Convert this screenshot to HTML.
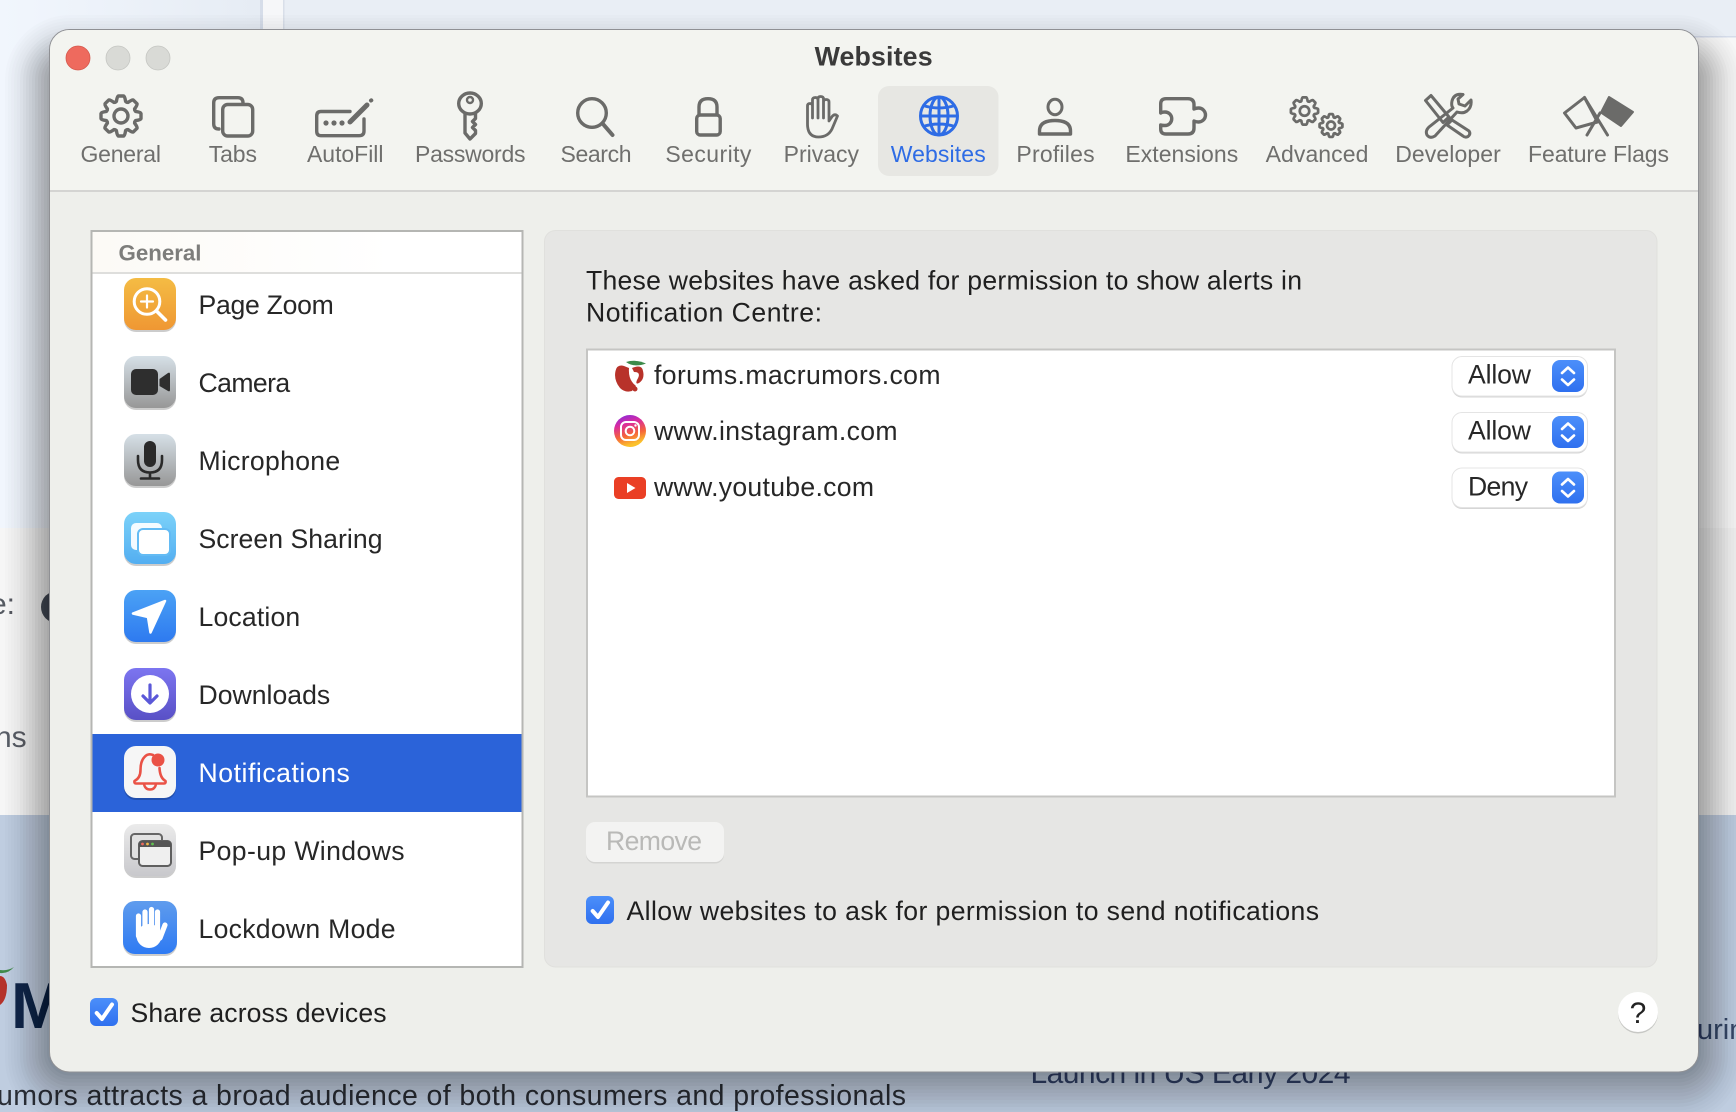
<!DOCTYPE html>
<html><head><meta charset="utf-8"><title>Websites</title>
<style>
html,body{margin:0;padding:0;background:#eef2f8;width:1736px;height:1112px;overflow:hidden}
svg{display:block;position:absolute;left:0;top:0}
text{font-family:"Liberation Sans",sans-serif}
.tb{font-size:23px;fill:#6f6f6d}
.li{font-size:26.6px;fill:#272727}
.tbi{fill:none;stroke:#6b6b69;stroke-width:3.4;stroke-linecap:round;stroke-linejoin:round}
</style></head><body>
<svg width="1736" height="1112" viewBox="0 0 1736 1112" xmlns="http://www.w3.org/2000/svg">
<defs>
<linearGradient id="bgl" x1="0" x2="1" y1="0" y2="0"><stop offset="0" stop-color="#f1f6fd"/><stop offset="1" stop-color="#e6ecf4"/></linearGradient>
<linearGradient id="hd" x1="0" x2="1" y1="0" y2="0"><stop offset="0" stop-color="#fcfaf6"/><stop offset="1" stop-color="#ffffff"/></linearGradient>
<linearGradient id="gO" x1="0" x2="0" y1="0" y2="1"><stop offset="0" stop-color="#f4bc44"/><stop offset="1" stop-color="#ef9733"/></linearGradient>
<linearGradient id="gG" x1="0" x2="0" y1="0" y2="1"><stop offset="0" stop-color="#d6e0e7"/><stop offset="1" stop-color="#979797"/></linearGradient>
<linearGradient id="gS" x1="0" x2="0" y1="0" y2="1"><stop offset="0" stop-color="#7cd2f9"/><stop offset="1" stop-color="#53aef1"/></linearGradient>
<linearGradient id="gB" x1="0" x2="0" y1="0" y2="1"><stop offset="0" stop-color="#4ba2f5"/><stop offset="1" stop-color="#2e7af0"/></linearGradient>
<linearGradient id="gP" x1="0" x2="0" y1="0" y2="1"><stop offset="0" stop-color="#7c75f0"/><stop offset="1" stop-color="#5950c6"/></linearGradient>
<linearGradient id="gW" x1="0" x2="0" y1="0" y2="1"><stop offset="0" stop-color="#ebebeb"/><stop offset="1" stop-color="#c8c8cc"/></linearGradient>
<linearGradient id="gL" x1="0" x2="0" y1="0" y2="1"><stop offset="0" stop-color="#5f9ced"/><stop offset="1" stop-color="#2e7af3"/></linearGradient>
<linearGradient id="gC" x1="0" x2="0" y1="0" y2="1"><stop offset="0" stop-color="#4c8ffa"/><stop offset="1" stop-color="#2f70ef"/></linearGradient>
<linearGradient id="gI" x1="0" x2="0.3" y1="0" y2="1"><stop offset="0" stop-color="#7a2be8"/><stop offset=".35" stop-color="#d92ba0"/><stop offset=".7" stop-color="#f5643a"/><stop offset="1" stop-color="#fbc22c"/></linearGradient>
<g id="tooth"><path d="M-5.74-13.86L-4.6-14.6Q-3.8-20-2.6-20H2.6Q3.8-20 4.6-14.6L5.74-13.86"/></g>
<g id="gear"><use href="#tooth"/><use href="#tooth" transform="rotate(45)"/><use href="#tooth" transform="rotate(90)"/><use href="#tooth" transform="rotate(135)"/><use href="#tooth" transform="rotate(180)"/><use href="#tooth" transform="rotate(225)"/><use href="#tooth" transform="rotate(270)"/><use href="#tooth" transform="rotate(315)"/><circle r="7"/></g>
<g id="sel">
<rect x="1452" y="358" width="135.5" height="39.5" rx="10" fill="#000" fill-opacity=".16"/>
<rect x="1452" y="356.5" width="135.5" height="39.5" rx="10" fill="#fff" stroke="#e4e4e4"/>
<rect x="1552" y="360" width="32" height="32" rx="8" fill="url(#gC)"/>
<path d="M1562 373L1568 367.5L1574 373M1562 379.5L1568 385L1574 379.5" fill="none" stroke="#fff" stroke-width="2.6" stroke-linecap="round" stroke-linejoin="round"/>
</g>
</defs>

<!-- page behind -->
<rect width="1736" height="1112" fill="#f7f7f7"/>
<rect width="285" height="528" fill="url(#bgl)"/>
<rect y="528" x="1698" width="38" height="287" fill="#f2f2f2"/>
<rect width="1736" height="36" fill="#e9eef5"/>
<rect x="0" y="0" width="262" height="36" fill="url(#bgl)"/>
<rect x="260" y="0" width="3" height="36" fill="#d6dde9"/>
<rect x="263" y="0" width="20" height="36" fill="#f6f7f9"/>
<rect x="283" y="0" width="1.5" height="36" fill="#d9dfe9"/>
<rect x="285" y="36" width="1451" height="1.5" fill="#d5dcea"/>
<rect x="0" y="528" width="60" height="287" fill="#f6f6f6"/>
<rect x="0" y="815" width="1736" height="297" fill="#bfcde0"/>
<text x="-10" y="614" font-size="30" fill="#555a62">e:</text>
<circle cx="57" cy="607" r="16" fill="#4a4f58"/>
<text x="-5" y="747" font-size="30" fill="#5a5f68">ns</text>
<path d="M0 976Q5 976 7 985Q7 1000 0 1005Z" fill="#b5322a"/>
<path d="M0 970Q8 971 14 967Q8 974 0 973Z" fill="#3f8a4a"/>
<text x="11" y="1028" font-size="65" font-weight="bold" fill="#14284a">M</text>
<text x="-3" y="1105" font-size="28.5" fill="#2a2e36" textLength="909">umors attracts a broad audience of both consumers and professionals</text>
<text x="1030.5" y="1083" font-size="30" fill="#37476a" textLength="320">Launch in US Early 2024</text>
<text x="1697" y="1039" font-size="29" fill="#37476a">urin</text>

<!-- window shadow built from stacked translucent rounded rects -->
<g fill="#000" fill-opacity=".031">
<rect x="47" y="57" width="1654" height="1018.5" rx="23"/>
<rect x="44" y="54" width="1660" height="1025" rx="26"/>
<rect x="41" y="51" width="1666" height="1031.5" rx="29"/>
<rect x="38" y="48" width="1672" height="1038" rx="32"/>
<rect x="35" y="45" width="1678" height="1044.5" rx="35"/>
</g>
<g fill="#000" fill-opacity=".023">
<rect x="32" y="42" width="1684" height="1051" rx="38"/>
<rect x="29" y="39" width="1690" height="1057.5" rx="41"/>
<rect x="26" y="36" width="1696" height="1064" rx="44"/>
<rect x="23" y="33" width="1702" height="1070.5" rx="47"/>
<rect x="20" y="30" width="1708" height="1077" rx="50"/>
</g>
<g fill="#000" fill-opacity=".012">
<rect x="17" y="27" width="1714" height="1083.5" rx="53"/>
<rect x="14" y="24" width="1720" height="1090" rx="56"/>
<rect x="11" y="21" width="1726" height="1096.5" rx="59"/>
<rect x="8" y="18" width="1732" height="1103" rx="62"/>
<rect x="5" y="15" width="1738" height="1109.5" rx="65"/>
</g>

<!-- window -->
<rect x="49.5" y="29.5" width="1649" height="1042.5" rx="20" fill="#eeefeb" stroke="#8f9094" stroke-width="1"/>
<path d="M50 190V49.5A19.5 19.5 0 0 1 69.5 30H1678.5A19.5 19.5 0 0 1 1698 49.5V190Z" fill="#f3f4f0"/>
<rect x="50" y="190" width="1648" height="2" fill="#d4d4d2"/>
<circle cx="78" cy="58" r="12" fill="#ee6a5e" stroke="#d5584d" stroke-width=".8"/>
<circle cx="118" cy="58" r="12" fill="#d9dad6" stroke="#c5c6c2" stroke-width=".8"/>
<circle cx="158" cy="58" r="12" fill="#d9dad6" stroke="#c5c6c2" stroke-width=".8"/>
<text x="814.6" y="65.5" font-size="26.8" font-weight="bold" fill="#3a3a3a" textLength="118">Websites</text>

<rect x="878" y="86" width="120.5" height="90" rx="11" fill="#e7e7e3"/>

<!-- toolbar icons -->
<g class="tbi">
<use href="#gear" transform="translate(121 116)"/>
<path d="M219 129Q213.7 129 213.7 124V103Q213.7 97.7 219 97.7H238Q243 97.7 243 103"/>
<rect x="222.7" y="104.5" width="30" height="31.5" rx="5"/>
<path d="M350 111.5H321Q316.7 111.5 316.7 116V131Q316.7 135.7 321 135.7H359Q364 135.7 364 131V119"/>
<path d="M350 122L367 105" stroke-width="5"/>
<path d="M371 100.5L371.3 100.3" stroke-width="4"/>
<ellipse cx="470" cy="103.5" rx="11.3" ry="10.5"/>
<circle cx="470" cy="100" r="3" stroke-width="2.4"/>
<path d="M465 113.5V133L470 139L475.5 133.5V130.5L472.5 127.5L475.5 124.5L472.5 121.5L475.5 118.5V113.5"/>
<circle cx="592" cy="113" r="14.3"/>
<path d="M603 124L612.5 135" stroke-width="4"/>
<path d="M699 114V107Q699 98.7 708 98.7Q717 98.7 717 107V114"/>
<rect x="696.7" y="115" width="23.5" height="20" rx="3.5"/>
<path d="M807.5 124V106Q807.5 103.5 810 103.5Q812.5 103.5 812.5 106V100Q812.5 97.5 815.5 97.5Q818 97.5 818 100V99Q818 96.5 820.5 96.5Q823.5 96.5 823.5 99V102Q823.5 99.5 826 99.5Q829 99.5 829 102V121L832.5 116Q835 113.5 837.5 116L832 129Q828 137 818.5 137Q807.5 137 807.5 124ZM812.5 106V118M818 100V118M823.5 102V118" stroke-width="2.8"/>
<ellipse cx="1055" cy="107" rx="7" ry="7.7" stroke-width="3"/>
<path d="M1039.5 134V131Q1039.5 120.5 1055 120.5Q1070.5 120.5 1070.5 131V134Z"/>
<path d="M1166 98.7H1188Q1194 98.7 1194 104.7V109Q1196 108 1198.5 108A7 7 0 0 1 1198.5 122Q1196 122 1194 121V128Q1194 134 1188 134H1166Q1160.7 134 1160.7 129V125Q1162 125.5 1165 125.5A6.7 6.7 0 0 0 1165 112Q1162 112 1160.7 113V104Q1160.7 98.7 1166 98.7Z"/>
<use href="#gear" transform="translate(1304.5 111) scale(.68)" stroke-width="4"/>
<use href="#gear" transform="translate(1331 125.5) scale(.57)" stroke-width="4.8"/>
<g stroke-width="3">
<path d="M1425.5 100.5L1431 95.5L1449 117L1443 122.5Z"/>
<path d="M1447 125L1452 120L1469 131Q1471 134 1468 136.5Q1465 138 1463 136Z"/>
<path d="M1463 94.5Q1454 93 1452 101Q1451 106 1453 108L1429 127Q1425 131 1427 135Q1430 139 1435 136L1457 112Q1463 114 1467 111Q1472 107 1471 100L1465 106L1459 104L1458 99Z"/>
</g>
<path d="M1564.5 113L1584.5 97.5L1597.5 122L1576 128Z" stroke-width="3"/>
<path d="M1584.5 97.5L1607.5 135M1600 113L1587 135" stroke-width="3"/>
</g>
<circle cx="326" cy="123" r="2.6" fill="#6b6b69"/><circle cx="334" cy="123" r="2.6" fill="#6b6b69"/><circle cx="342" cy="123" r="2.6" fill="#6b6b69"/>
<path d="M1601 112.5L1609 97L1633 112L1621 126Z" fill="#6b6b69" stroke="#6b6b69" stroke-width="2" stroke-linejoin="round"/>
<g fill="none" stroke="#2e6ce5" stroke-width="3">
<ellipse cx="939" cy="116" rx="18.5" ry="19"/>
<ellipse cx="939" cy="116" rx="9" ry="19"/>
<path d="M939 97V135M920.5 116H957.5M923 105.5Q939 110.5 955 105.5M923 126.5Q939 121.5 955 126.5"/>
</g>

<g class="tb">
<text x="80.5" y="162" textLength="80.5">General</text>
<text x="208.7" y="162" textLength="48.3">Tabs</text>
<text x="307" y="162" textLength="76.5">AutoFill</text>
<text x="415" y="162" textLength="110.5">Passwords</text>
<text x="560.5" y="162" textLength="71">Search</text>
<text x="665.4" y="162" textLength="86">Security</text>
<text x="783.6" y="162" textLength="75.4">Privacy</text>
<text x="890.7" y="162" textLength="95" style="fill:#2e6ce5">Websites</text>
<text x="1016.4" y="162" textLength="78.2">Profiles</text>
<text x="1125.4" y="162" textLength="112.8">Extensions</text>
<text x="1265.6" y="162" textLength="102.8">Advanced</text>
<text x="1395.2" y="162" textLength="105.6">Developer</text>
<text x="1528" y="162" textLength="141">Feature Flags</text>
</g>

<!-- sidebar list -->
<rect x="91.5" y="231" width="431" height="736" fill="#fff" stroke="#b5b6b3" stroke-width="2"/>
<rect x="92.5" y="232" width="300" height="40" fill="url(#hd)"/>
<rect x="92.5" y="272" width="429" height="2" fill="#dededc"/>
<text x="118.5" y="260.5" font-size="22.3" font-weight="bold" fill="#7d7d7b" textLength="83">General</text>
<rect x="92.5" y="734" width="429" height="78" fill="#2b63d9"/>

<!-- icon drop shadows -->
<g fill="#000" fill-opacity=".2">
<rect x="124" y="280" width="52" height="52" rx="12"/>
<rect x="124" y="358" width="52" height="52" rx="12"/>
<rect x="124" y="436" width="52" height="52" rx="12"/>
<rect x="124" y="514" width="52" height="52" rx="12"/>
<rect x="124" y="592" width="52" height="52" rx="12"/>
<rect x="124" y="670" width="52" height="52" rx="12"/>
<rect x="124" y="748" width="52" height="52" rx="12"/>
<rect x="124" y="826" width="52" height="52" rx="12"/>
<rect x="123" y="903" width="54" height="53" rx="12"/>
</g>

<rect x="124" y="278" width="52" height="52" rx="12" fill="url(#gO)"/>
<g fill="none" stroke="#fff" stroke-linecap="round">
<circle cx="147" cy="301.5" r="12.8" stroke-width="3"/>
<path d="M147 295.5V307.5M141 301.5H153" stroke-width="2.2"/>
<path d="M156.5 311L165.5 320" stroke-width="3.6"/>
</g>

<rect x="124" y="356" width="52" height="52" rx="12" fill="url(#gG)"/>
<rect x="131" y="369" width="27" height="26" rx="5" fill="#2e2e2e"/>
<path d="M159.5 379L168 373Q170 372 170 374V390Q170 392 168 391L159.5 386Z" fill="#2e2e2e"/>

<rect x="124" y="434" width="52" height="52" rx="12" fill="url(#gG)"/>
<rect x="144" y="441" width="12" height="26" rx="6" fill="#2a2a2a"/>
<path d="M138 456V460Q138 472.5 150 472.5Q162 472.5 162 460V456M150 472.5V478M141 478.5H159" fill="none" stroke="#2a2a2a" stroke-width="2.6" stroke-linecap="round"/>

<rect x="124" y="512" width="52" height="52" rx="12" fill="url(#gS)"/>
<rect x="131" y="523" width="31" height="27" rx="5" fill="#fff" opacity=".92"/>
<rect x="138" y="529" width="32" height="26" rx="5" fill="#fff" stroke="#63bbf4" stroke-width="2"/>

<rect x="124" y="590" width="52" height="52" rx="12" fill="url(#gB)"/>
<path d="M165 601L133 613.5L148 617L150.5 632.5Z" fill="#fff" stroke="#fff" stroke-width="2.5" stroke-linejoin="round"/>

<rect x="124" y="668" width="52" height="52" rx="12" fill="url(#gP)"/>
<circle cx="150" cy="694" r="19" fill="#fff"/>
<path d="M150 685V702M143 696L150 703L157 696" fill="none" stroke="#5b58d8" stroke-width="3.2" stroke-linecap="round" stroke-linejoin="round"/>

<rect x="124" y="746" width="52" height="52" rx="12" fill="#f6f6f6"/>
<path d="M153 755Q148 753 144.5 757Q140.5 761 140.5 770Q140.5 778 134.5 781Q134 783.5 136 783.5H164Q166 783.5 165.5 781Q160 778 159.5 768" fill="none" stroke="#ea5246" stroke-width="2.6" stroke-linecap="round" stroke-linejoin="round"/>
<path d="M144 784Q145 789.5 150 789.5Q155 789.5 156 784" fill="none" stroke="#ea5246" stroke-width="2.4"/>
<circle cx="158" cy="760" r="6.5" fill="#ea5246"/>

<rect x="124" y="824" width="52" height="52" rx="12" fill="url(#gW)"/>
<rect x="131" y="834" width="31" height="25" rx="3.5" fill="#e2e2e2" stroke="#666" stroke-width="2"/>
<rect x="139" y="841" width="32" height="25" rx="3.5" fill="#efefef" stroke="#5f5f5f" stroke-width="2"/>
<path d="M139 847V844.5Q139 841 142.5 841H167.5Q171 841 171 844.5V847Z" fill="#555"/>
<circle cx="142.5" cy="844" r="1.4" fill="#ee6a5e"/><circle cx="147.5" cy="844" r="1.4" fill="#f2b84a"/><circle cx="152.5" cy="844" r="1.4" fill="#5fc24f"/>

<rect x="123" y="901" width="54" height="53" rx="12" fill="url(#gL)"/>
<g stroke="#fff" stroke-width="5.2" stroke-linecap="round" fill="none">
<path d="M138.5 916V936M145 912V934M151.5 909.5V934M157.5 912V934"/>
<path d="M160 938L165 925"/>
</g>
<ellipse cx="149" cy="936" rx="12.5" ry="12" fill="#fff"/>

<g class="li">
<text x="198.5" y="314" textLength="135.3">Page Zoom</text>
<text x="198.5" y="392" textLength="91.7">Camera</text>
<text x="198.5" y="470" textLength="141.7">Microphone</text>
<text x="198.5" y="548" textLength="184">Screen Sharing</text>
<text x="198.5" y="626" textLength="101.7">Location</text>
<text x="198.5" y="704" textLength="131.7">Downloads</text>
<text x="198.5" y="782" textLength="151.3" style="fill:#fff">Notifications</text>
<text x="198.5" y="860" textLength="206">Pop-up Windows</text>
<text x="198.5" y="938" textLength="197">Lockdown Mode</text>
</g>

<!-- right panel -->
<rect x="544.5" y="230.5" width="1112.5" height="736.5" rx="11" fill="#e6e6e4" stroke="#e0e0dd"/>
<g class="li">
<text x="586" y="289.5" textLength="716" style="fill:#1f1f1f">These websites have asked for permission to show alerts in</text>
<text x="586" y="321.5" textLength="236" style="fill:#1f1f1f">Notification Centre:</text>
</g>
<rect x="587" y="349.5" width="1028" height="447" fill="#fff" stroke="#c5c5c3" stroke-width="2"/>

<!-- site icons -->
<path d="M624 366Q617 364 615.5 371Q613.5 380 620 388Q625 393 632 391L636 386Q628 380 629 368Z" fill="#b8322a"/>
<path d="M632 368Q642 364 643 371Q645 379 639 383Q635 385 637 380Q642 372 634 372Z" fill="#b8322a"/>
<circle cx="635" cy="389" r="2.5" fill="#b8322a"/>
<path d="M626 362Q634 368 646 363.5Q636 359 626 362Z" fill="#3c8a4a"/>
<circle cx="630" cy="431" r="16" fill="url(#gI)"/>
<rect x="621" y="422" width="18" height="18" rx="5" fill="none" stroke="#fff" stroke-width="2"/>
<circle cx="630" cy="431" r="4.3" fill="none" stroke="#fff" stroke-width="2"/>
<circle cx="635.5" cy="425.5" r="1.2" fill="#fff"/>
<rect x="614" y="477" width="32" height="22" rx="4.5" fill="#ea3f25"/>
<path d="M627 483L635.5 488L627 493Z" fill="#fff"/>

<g class="li">
<text x="654" y="384" textLength="286.5">forums.macrumors.com</text>
<text x="654" y="440" textLength="243.5">www.instagram.com</text>
<text x="654" y="496" textLength="220">www.youtube.com</text>
</g>

<use href="#sel"/>
<use href="#sel" y="56"/>
<use href="#sel" y="111.5"/>
<g class="li">
<text x="1468" y="383.5" textLength="63">Allow</text>
<text x="1468" y="439.5" textLength="63">Allow</text>
<text x="1468" y="495.5" textLength="60">Deny</text>
</g>

<rect x="586" y="823.5" width="138" height="40" rx="9" fill="#000" fill-opacity=".08"/>
<rect x="586" y="822" width="138" height="40" rx="9" fill="#f3f3f2"/>
<text x="606" y="850" font-size="26.6" fill="#b9b9b7" textLength="96">Remove</text>

<rect x="586" y="896" width="28" height="28" rx="6" fill="url(#gC)"/>
<path d="M592.7 911L598 917L608 902.5" fill="none" stroke="#fff" stroke-width="4" stroke-linecap="round" stroke-linejoin="round"/>
<text x="626.5" y="920" class="li" textLength="692.5" style="fill:#1f1f1f">Allow websites to ask for permission to send notifications</text>

<rect x="90" y="998" width="28" height="28" rx="6" fill="url(#gC)"/>
<path d="M96.7 1013L102 1019L112 1004.5" fill="none" stroke="#fff" stroke-width="4" stroke-linecap="round" stroke-linejoin="round"/>
<text x="130.5" y="1022" class="li" textLength="256" style="fill:#1f1f1f">Share across devices</text>

<circle cx="1638" cy="1013.5" r="20" fill="#000" fill-opacity=".16"/>
<circle cx="1638" cy="1012" r="20" fill="#fff"/>
<text x="1638" y="1023" text-anchor="middle" font-size="30" fill="#222">?</text>
</svg>
</body></html>
